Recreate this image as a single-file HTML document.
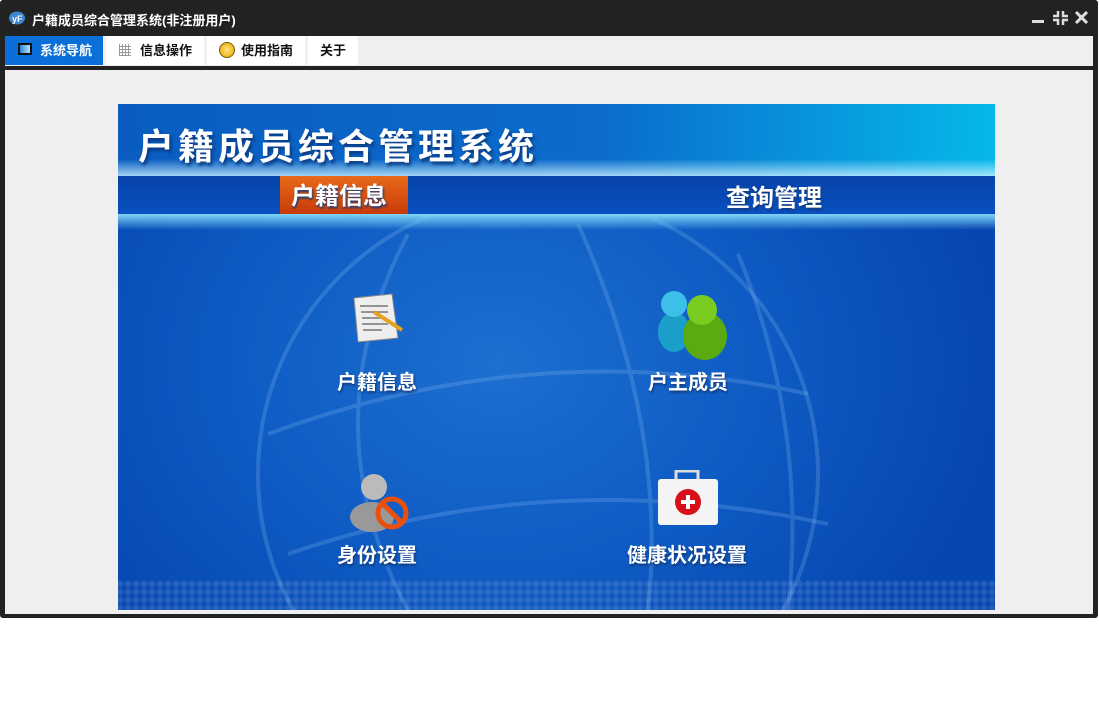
<!DOCTYPE html>
<html><head><meta charset="utf-8"><style>
*{margin:0;padding:0;box-sizing:border-box}
html,body{width:1099px;height:723px;overflow:hidden}
body{background:#fff;font-family:"Liberation Sans","Noto Sans CJK SC",sans-serif;position:relative}
#win{position:absolute;left:0;top:0;width:1098px;height:618px;background:#222;border-radius:3px}
#title{position:absolute;left:32px;top:10px;color:#fff;font-size:13px;font-weight:bold}
#content{position:absolute;left:5px;top:36px;width:1088px;height:578px;background:#efefef;overflow:hidden}
.tab{position:absolute;top:0;height:29px;background:#fff;font-size:13px;font-weight:bold;color:#111;line-height:29px}
#bar{position:absolute;left:0;top:30px;width:1088px;height:4px;background:#222}
#banner{position:absolute;left:113px;top:68px;width:877px;height:506px;overflow:hidden;
background:radial-gradient(ellipse 500px 400px at 380px 260px,#1d6fd0 0%,#0f5cc4 50%,#0646b0 100%)}
.lbl{position:absolute;color:#fff;font-size:20px;font-weight:bold;text-shadow:1px 2px 2px #123a7a}
</style></head><body>
<div id="win">
<svg style="position:absolute;left:9px;top:10px" width="16" height="15"><ellipse cx="8" cy="8" rx="8" ry="6.5" fill="#3a86d0"/><text x="3" y="12" font-size="9" fill="#fff" font-weight="bold" font-family="Liberation Sans">yF</text></svg>
<div id="title">户籍成员综合管理系统(非注册用户)</div>
<div style="position:absolute;left:1032px;top:20px;width:12px;height:3px;background:#ddd"></div>
<svg style="position:absolute;left:1053px;top:11px" width="15" height="14" stroke="#ddd" stroke-width="2.5" fill="none"><path d="M5 0V5H0M10 0V5H15M5 14V9H0M10 14V9H15"/></svg>
<svg style="position:absolute;left:1075px;top:11px" width="13" height="13" stroke="#ddd" stroke-width="3"><path d="M1 1L12 12M12 1L1 12"/></svg>
<div id="content">
<div class="tab" style="left:0;width:98px;background:#0a6fd8;color:#fff;padding-left:35px">系统导航
<div style="position:absolute;left:13px;top:7px;width:14px;height:12px;border:2px solid #111;background:linear-gradient(90deg,#2a8ad8,#bfe0f8)"></div></div>
<div class="tab" style="left:101px;width:98px;padding-left:34px">信息操作
<div style="position:absolute;left:13px;top:8px;width:12px;height:12px;background:repeating-linear-gradient(90deg,#999 0 1px,transparent 1px 3px),repeating-linear-gradient(0deg,#999 0 1px,#fff 1px 3px)"></div></div>
<div class="tab" style="left:202px;width:98px;padding-left:34px">使用指南
<div style="position:absolute;left:12px;top:6px;width:16px;height:16px;border-radius:50%;background:radial-gradient(#ffe27a,#e8a400);border:1px solid #7a5a00"></div></div>
<div class="tab" style="left:303px;width:50px;padding-left:12px">关于</div>
<div id="bar"></div>
<div id="banner">
<svg style="position:absolute;left:130px;top:110px" width="600" height="396" fill="none" stroke="rgba(150,200,245,.22)" stroke-width="4">
<circle cx="290" cy="260" r="280"/><path d="M20 220Q290 120 560 180M40 340Q300 250 580 310M160 20Q60 210 160 396M330 10Q420 210 400 396M490 40Q560 210 540 396"/></svg>
<div style="position:absolute;left:0;top:0;width:877px;height:72px;background:linear-gradient(90deg,#0a5cc0 0%,#0b6ccc 55%,#05b8ea 100%)"></div>
<div style="position:absolute;left:0;top:55px;width:877px;height:17px;background:linear-gradient(180deg,rgba(255,255,255,0),rgba(200,240,255,.8))"></div>
<div style="position:absolute;left:20px;top:14px;color:#fff;font-size:36px;font-weight:bold;letter-spacing:4px;text-shadow:2px 3px 3px #0a3a80">户籍成员综合管理系统</div>
<div style="position:absolute;left:0;top:72px;width:877px;height:38px;background:linear-gradient(180deg,#0642a8,#0a50c0)"></div>
<div style="position:absolute;left:162px;top:72px;width:128px;height:38px;background:linear-gradient(180deg,#e86a1a,#c83a08)"></div>
<div class="lbl" style="left:173px;top:72px;font-size:24px">户籍信息</div>
<div class="lbl" style="left:608px;top:74px;font-size:24px">查询管理</div>
<div style="position:absolute;left:0;top:110px;width:877px;height:16px;background:linear-gradient(180deg,#7fd6f8,rgba(30,120,220,0))"></div>
<svg style="position:absolute;left:230px;top:188px" width="60" height="55"><path d="M6 6L44 2L50 46L10 50Z" fill="#eee" stroke="#888"/><path d="M12 14H40M13 20H40M14 26H38M14 32H40M15 38H34" stroke="#777" stroke-width="1.5"/><path d="M26 20L54 38" stroke="#e8a020" stroke-width="4"/></svg>
<div class="lbl" style="left:219px;top:262px">户籍信息</div>
<svg style="position:absolute;left:536px;top:180px" width="80" height="80"><ellipse cx="20" cy="48" rx="16" ry="20" fill="#1aa0c8"/><circle cx="20" cy="20" r="13" fill="#3cc0ea"/><ellipse cx="51" cy="52" rx="22" ry="24" fill="#5aaa10"/><circle cx="48" cy="26" r="15" fill="#7acc20"/></svg>
<div class="lbl" style="left:530px;top:262px">户主成员</div>
<svg style="position:absolute;left:228px;top:365px" width="70" height="65"><circle cx="28" cy="18" r="13" fill="#bbb"/><ellipse cx="26" cy="48" rx="22" ry="15" fill="#999"/><circle cx="46" cy="44" r="14" fill="none" stroke="#e85010" stroke-width="5"/><path d="M37 35L55 53" stroke="#e85010" stroke-width="5"/></svg>
<div class="lbl" style="left:219px;top:435px">身份设置</div>
<svg style="position:absolute;left:538px;top:366px" width="64" height="56"><rect x="20" y="1" width="22" height="10" fill="none" stroke="#ddd" stroke-width="3"/><rect x="2" y="9" width="60" height="46" rx="3" fill="#f4f4f4"/><circle cx="32" cy="32" r="13" fill="#d8101a"/><path d="M32 25V39M25 32H39" stroke="#fff" stroke-width="4"/></svg>
<div class="lbl" style="left:509px;top:435px">健康状况设置</div>
<div style="position:absolute;left:0;top:476px;width:877px;height:30px;background:repeating-linear-gradient(90deg,rgba(255,255,255,.07) 0 4px,transparent 4px 8px),repeating-linear-gradient(0deg,rgba(255,255,255,.07) 0 4px,transparent 4px 8px)"></div>
</div>
</div>
</div>
</body></html>
